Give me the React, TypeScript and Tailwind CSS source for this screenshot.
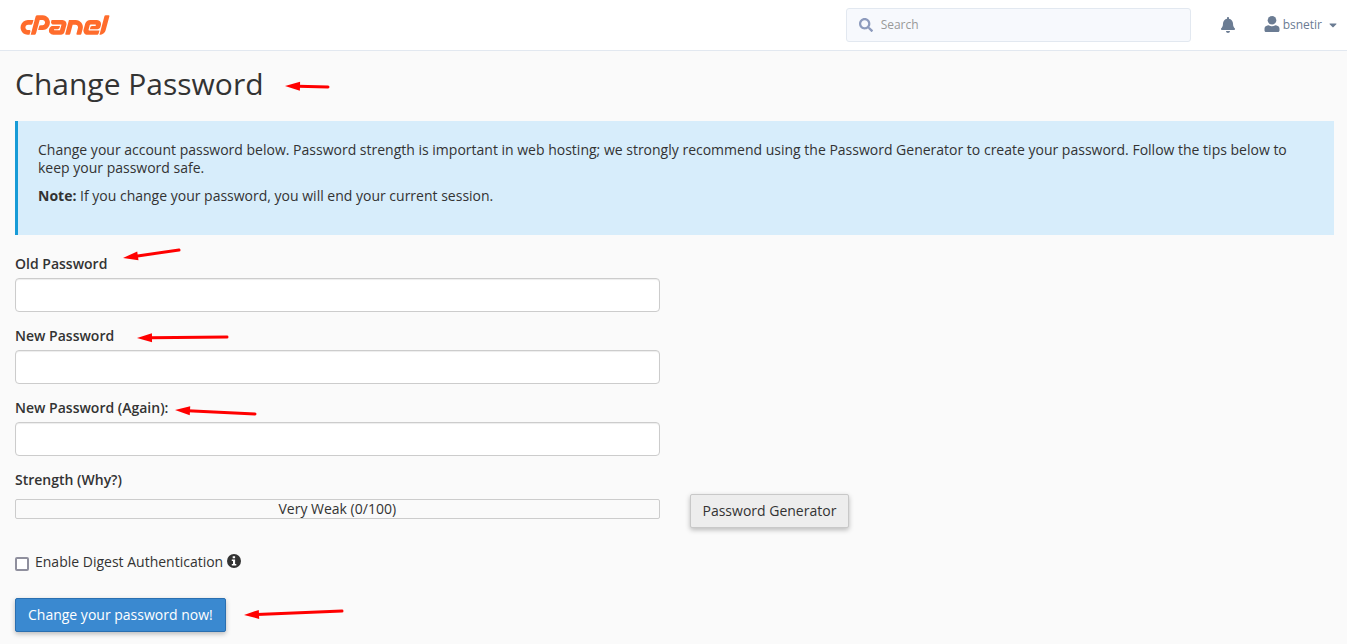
import { FaBell, FaCaretDown, FaSearch } from "react-icons/fa";
import { SiCpanel } from "react-icons/si";

function UserIcon({ className }: { className: string }) {
  return (
    <svg viewBox="0 0 16 16" fill="currentColor" className={className} aria-hidden="true">
      <circle cx="8" cy="4.3" r="4.3" />
      <path d="M4.6 9.3c2.1 1.3 4.7 1.3 6.8 0l1.2.2c1.7.3 2.9 1.6 2.9 3.3v1.7c0 .8-.6 1.5-1.5 1.5H2c-.9 0-1.5-.7-1.5-1.5v-1.7c0-1.7 1.2-3 2.9-3.3Z" />
    </svg>
  );
}

function InfoIcon({ className }: { className: string }) {
  return (
    <svg viewBox="0 0 14 14" className={className} aria-hidden="true">
      <circle cx="7" cy="7" r="7" fill="currentColor" />
      <path d="M5.7 2.2h2.4v2H5.7ZM4.8 5.4h3.3v4.5h1.2v1.7H4.8V9.9H6V7.1H4.8Z" fill="#ffffff" />
    </svg>
  );
}

function PasswordField({ id, label }: { id: string; label: string }) {
  return (
    <div className="mb-[15px] flex flex-col gap-[5px]">
      <label htmlFor={id} className="leading-[18px] font-semibold">{label}</label>
      <input
        id={id}
        type="password"
        className="h-[34px] w-full rounded-[4px] border border-[#cccccc] bg-white px-3 shadow-[inset_0_1px_1px_rgba(0,0,0,0.075)]"
      />
    </div>
  );
}

const arrows = [
  { tip: [285, 86], tail: [328, 87] },
  { tip: [123, 258], tail: [179, 250] },
  { tip: [137, 338], tail: [227, 337] },
  { tip: [175, 410], tail: [255, 414] },
  { tip: [244, 615], tail: [342, 611] },
];

function Arrows() {
  return (
    <svg className="pointer-events-none absolute top-0 left-0" width="350" height="640" aria-hidden="true">
      {arrows.map(({ tip, tail }) => {
        const [x, y] = tip;
        const dx = tail[0] - x;
        const dy = tail[1] - y;
        const length = Math.hypot(dx, dy);
        const angle = (Math.atan2(dy, dx) * 180) / Math.PI;
        return (
          <g key={y} transform={`translate(${x} ${y}) rotate(${angle})`}>
            <path d="M0 0 15 -4.5V4.5Z" fill="#ff0000" />
            <path d={`M13 0H${length}`} stroke="#ff0000" strokeWidth="3" strokeLinecap="round" />
          </g>
        );
      })}
    </svg>
  );
}

export default function App() {
  return (
    <div className="relative min-h-screen bg-[#fafafa] font-['Open_Sans','Noto_Sans',sans-serif] text-[14px] leading-[18px] text-[#333333]">
      <header className="flex h-[51px] items-center border-b border-[#e2e8f0] bg-white pr-2 pl-5">
        <a href="#home" aria-label="cPanel" className="text-[#ff6c2c]">
          <SiCpanel viewBox="0 9.3 24 5.4" className="h-5 w-[90px]" />
        </a>
        <div className="ml-auto flex h-[34px] w-[345px] items-center gap-2 rounded-[3px] border border-[#e2e8f0] bg-[#f7f9fd] px-3">
          <FaSearch className="size-[14px] text-[#8d9bbd]" />
          <input
            type="search"
            aria-label="Search"
            placeholder="Search"
            className="min-w-0 flex-1 bg-transparent text-[12px] outline-none placeholder:text-[#999999]"
          />
        </div>
        <button aria-label="Notifications" className="ml-[29px] text-[#6b7c93]">
          <FaBell className="size-4" />
        </button>
        <button className="ml-7 flex items-center text-[12px] text-[#6b7c93]">
          <UserIcon className="mr-[3px] mb-[2px] size-4" />
          bsnetir
          <FaCaretDown className="ml-[5px] size-3" />
        </button>
      </header>

      <main className="px-[15px] pr-[13px] pb-3">
        <h1 className="pt-[15px] text-[30px] leading-9">Change Password</h1>

        <div className="mt-[19px] mb-5 border-l-[3px] border-[#179bd7] bg-[#d7edfb] p-5 pb-[30px]">
          <p>
            Change your account password below. Password strength is important in web hosting; we strongly recommend using
            the Password Generator to create your password. Follow the tips below to keep your password safe.
          </p>
          <p className="mt-[10px]">
            <strong>Note:</strong> If you change your password, you will end your current session.
          </p>
        </div>

        <form onSubmit={(event) => event.preventDefault()}>
          <div className="w-[calc(50%-15px)]">
            <PasswordField id="old-password" label="Old Password" />
            <PasswordField id="new-password" label="New Password" />
            <PasswordField id="new-password-again" label="New Password (Again):" />
          </div>

          <p className="font-semibold">Strength (Why?)</p>
          <div className="mt-[5px] flex items-start gap-[30px]">
            <div className="mt-[5px] flex h-5 w-[calc(50%-15px)] items-center justify-center rounded-[2px] border border-[#cccccc]">
              Very Weak (0/100)
            </div>
            <button
              type="button"
              className="h-[34px] rounded-[2px] border border-[#c8c8c8] bg-[#ededed] px-3 shadow-[0_2px_5px_rgba(0,0,0,0.26)]"
            >
              Password Generator
            </button>
          </div>

          <div className="mt-[25px] flex items-center">
            <input
              id="digest"
              type="checkbox"
              className="mt-1 mr-[6px] size-[14px] appearance-none rounded-[2px] border-2 border-[#8f8f9d] bg-white checked:bg-[#3a89d0]"
            />
            <label htmlFor="digest">Enable Digest Authentication</label>
            <InfoIcon className="mb-[2px] ml-1 size-[14px]" />
          </div>

          <button
            type="submit"
            className="mt-[27px] h-[34px] rounded-[2px] border border-[#2a6fb0] bg-[#3a89d0] px-3 text-white shadow-[0_2px_5px_rgba(0,0,0,0.26)]"
          >
            Change your password now!
          </button>
        </form>
      </main>
      <Arrows />
    </div>
  );
}
